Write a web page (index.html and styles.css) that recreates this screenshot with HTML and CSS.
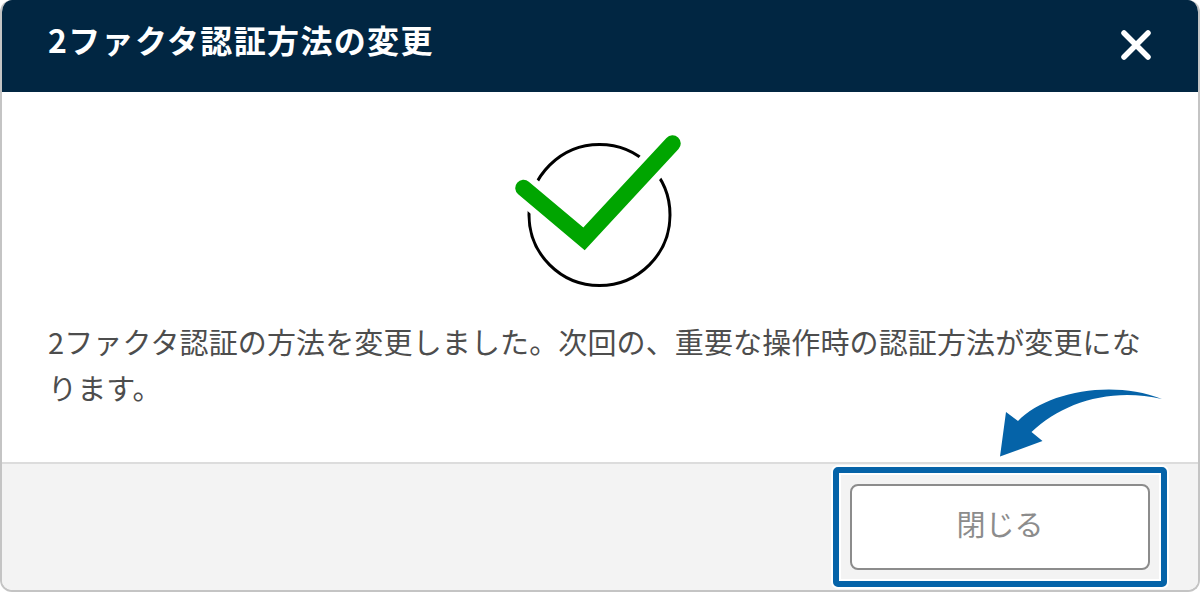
FILE: index.html
```html
<!DOCTYPE html>
<html lang="ja">
<head>
<title>2ファクタ認証方法の変更</title>
<link rel="stylesheet" href="styles.css">
</head>
<body>

  <div class="modal">
    <div class="modal-header">
      <h1 class="modal-title">2ファクタ認証方法の変更</h1>
      <svg class="close-icon" width="30" height="30" viewBox="0 0 30 30">
        <path d="M3 3L27 27M27 3L3 27" fill="none" stroke="#fff" stroke-width="5.5" stroke-linecap="round"/>
      </svg>
    </div>
    <div class="modal-body">
      <svg class="check-icon" width="170" height="160" viewBox="0 0 170 160">
        <!-- offset: x-515, y-135 -->
        <circle cx="84.5" cy="80" r="70.5" fill="none" stroke="#000" stroke-width="3"/>
        <path d="M8.5 53L69 103.8L157.5 8.5" fill="none" stroke="#fff" stroke-width="30"/>
        <path d="M8.5 53L69 103.8L157.5 8.5" fill="none" stroke="#00a500" stroke-width="16.5" stroke-linecap="round" stroke-linejoin="miter"/>
      </svg>
      <p class="message">2ファクタ認証の方法を変更しました。次回の、重要な操作時の認証方法が変更になります。</p>
    </div>
    <div class="modal-footer">
      <button class="close-button" type="button">閉じる</button>
    </div>
  </div>

  <div class="highlight"></div>
  <svg class="arrow" width="170" height="80" viewBox="0 0 170 80">
    <!-- offset: x-1000, y-385 -->
    <path d="M0 71.5L6 27L18 36C45 8 110 -6 162 14C110 2 62 18 31.5 47L42.5 56Z" fill="#0563a8"/>
  </svg>

</body>
</html>
```

FILE: styles.css
```css
html, body {margin: 0; height: 100%; background: #fff;}
body {position: relative; overflow: hidden; font-family: "Noto Sans CJK JP", "Noto Sans", sans-serif;}

.modal {box-sizing: border-box; width: 1200px; height: 592px; display: flex; flex-direction: column; border: 2px solid #c4c4c4; border-top: 0; border-radius: 12px; overflow: hidden; background: #fff;}

.modal-header {flex: none; height: 92px; margin: 0 -2px; display: flex; align-items: center; justify-content: space-between; padding: 0 48px; background: #012642; color: #fff;}
.modal-title {margin: 0 0 14px; font-size: 32px; font-weight: 700; line-height: 40px; letter-spacing: 1.35px;}
.close-icon {display: block; margin: 0 1px 2px 0;}

.modal-body {flex: 1; padding: 43px 46px 0;}
.check-icon {display: block; margin: 0 auto;}
.message {margin: 23px 0 0; font-size: 29px; line-height: 46px; letter-spacing: 0.13px; color: #4d4d4d;}

.modal-footer {flex: none; box-sizing: border-box; height: 128px; display: flex; justify-content: flex-end; padding: 20px 48px 18px; border-top: 2px solid #dcdcdc; background: #f3f3f3;}
.close-button {width: 300px; height: 86px; border: 2px solid #8c8c8c; border-radius: 8px; background: #fff; color: #8c8c8c; font-family: inherit; font-size: 29px; line-height: 1; padding: 0 0 8px;}

.highlight {position: absolute; left: 833px; top: 467px; width: 334px; height: 120px; box-sizing: border-box; border: 6px solid #0563a8; border-radius: 5px; box-shadow: 0 0 0 2px #fff, inset 0 0 0 2px #fff;}
.arrow {position: absolute; left: 1000px; top: 385px;}
```
